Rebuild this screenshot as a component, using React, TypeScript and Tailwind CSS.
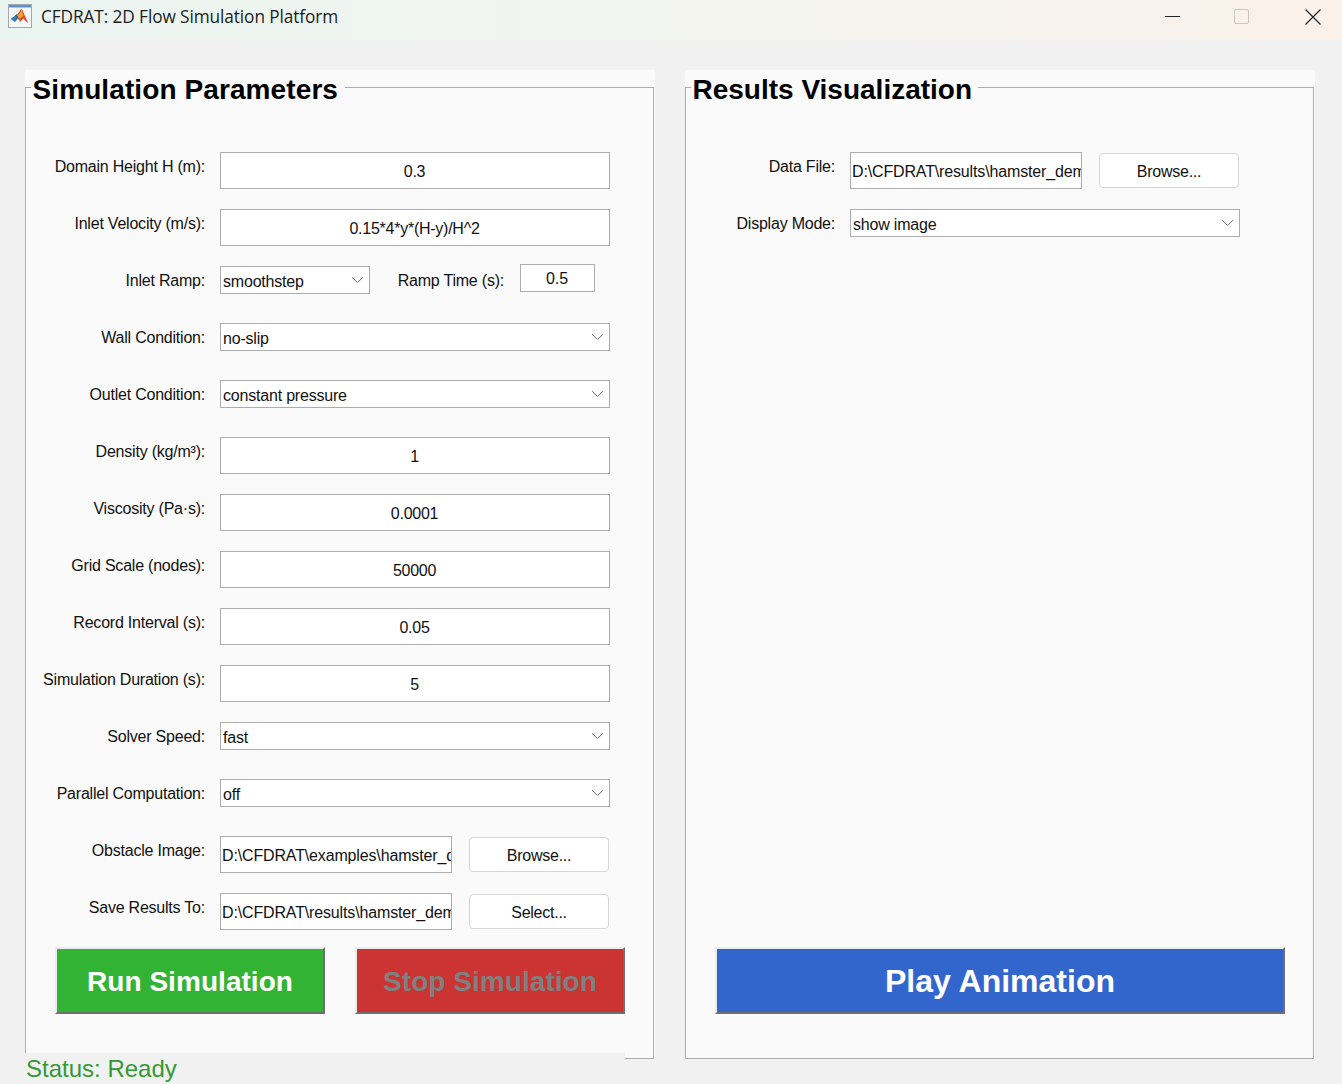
import type { ReactNode } from "react";

const sans = "font-['Liberation_Sans',Arial,sans-serif]";

function Chevron() {
  return (
    <svg className="w-[13px] h-[8px] text-[#6b6b6b]" viewBox="0 0 13 8" fill="none" stroke="currentColor" strokeWidth={1}>
      <path d="M1 1.2l5.5 5.3L12 1.2" />
    </svg>
  );
}

function Label({ text, width }: { text: string; width: string }) {
  return <div className={`${width} shrink-0 text-right text-[16px] leading-[20px] mt-[5px] -mr-[1px] tracking-[-0.22px] text-[#111]`}>{text}</div>;
}

function NumberBox({ value, className = "" }: { value: string; className?: string }) {
  return (
    <div className={`h-[37px] ml-[1px] border border-[#adadad] bg-white flex items-center justify-center pt-[2px] pr-[1px] text-[16px] tracking-[-0.25px] text-[#111] ${className}`}>
      {value}
    </div>
  );
}

function Dropdown({ value, className }: { value: string; className: string }) {
  return (
    <div className={`relative h-[28px] ml-[1px] border border-[#adadad] bg-white flex items-center pl-[2px] pt-[4px] text-[16px] tracking-[-0.2px] text-[#111] ${className}`}>
      <span>{value}</span>
      <span className="absolute right-[5px] top-[9px] flex"><Chevron /></span>
    </div>
  );
}

function PathBox({ value, className }: { value: string; className: string }) {
  return (
    <div className={`h-[37px] ml-[1px] border border-[#adadad] bg-white pl-[1px] flex items-center pt-[2px] overflow-hidden whitespace-nowrap text-[16px] tracking-[-0.15px] text-[#111] ${className}`}>
      {value}
    </div>
  );
}

function SmallButton({ text, className = "" }: { text: string; className?: string }) {
  return (
    <button className={`w-[140px] h-[35px] mt-[1px] pt-[2px] rounded-[4px] border border-[#d6d6d6] bg-white text-[16px] tracking-[-0.25px] text-[#111] ${className}`}>
      {text}
    </button>
  );
}

function BigButton({ text, className }: { text: string; className: string }) {
  return (
    <button className={`h-[67px] border-2 border-t-[#ececec] border-l-[#ececec] border-r-[#6e6e6e] border-b-[#6e6e6e] font-bold ${className}`}>
      {text}
    </button>
  );
}

function Row({ children, label, labelWidth = "w-[179px]" }: { children: ReactNode; label: string; labelWidth?: string }) {
  return (
    <div className="flex h-[37px] mb-[20px] gap-[15px]">
      <Label text={label} width={labelWidth} />
      {children}
    </div>
  );
}

function Panel({ title, titleClass, children }: { title: string; titleClass: string; children: ReactNode }) {
  return (
    <section className="relative w-[630px] h-[989px] bg-[#fafafa] pt-[17px]">
      <div className="w-[629px] h-[972px] border border-[#adadad] flex flex-col pt-[64px]">{children}</div>
      <h2 className={`absolute left-[6px] top-0 h-[36px] pl-[1.5px] bg-[#fafafa] whitespace-nowrap text-[28px] leading-[39px] font-bold text-black ${titleClass}`}>
        {title}
      </h2>
    </section>
  );
}

function MatlabIcon() {
  return (
    <svg className="absolute left-[8px] top-[4px]" width="24" height="24" viewBox="0 0 24 24">
      <rect x="0.5" y="0.5" width="23" height="23" fill="#f4f6f8" stroke="#a5a9ad" />
      <rect x="1" y="1" width="22" height="2.5" fill="#5f93c9" />
      <path d="M2.5 15l5-3.5 3 2.5-3.5 4z" fill="#3a78b8" />
      <path d="M7 11.5l2-1.5 3 4-1.5 1.5z" fill="#2b5d93" />
      <path d="M9 11l4.5-6.5c2 3 3.5 9 7 14.5-2-.8-3.5-2.5-5-4.5-1.5 1-2.5 2.5-3.5 3.5z" fill="#d9481f" />
      <path d="M13.5 4.5c-.5 3-1.5 5.5-4.5 6.5l2.5 4c1-1 2-2 4-3-.8-2.5-1.4-5-2-7.5z" fill="#f0a030" />
    </svg>
  );
}

export default function App() {
  return (
    <div className={`relative w-[1342px] h-[1084px] overflow-hidden bg-[#f1f1f1] ${sans}`}>
      <header className="relative h-[40px] bg-gradient-to-r from-[#eaf5f1] via-[#f2f4ee] to-[#faf1ea] flex items-center">
        <MatlabIcon />
        <span className="ml-[41px] -mt-[7px] text-[17.25px] font-['Open_Sans',sans-serif] text-[#1c1c1c] tracking-[-0.1px]">
          CFDRAT: 2D Flow Simulation Platform
        </span>
        <div className="ml-auto flex items-center -mt-[7px]">
          <span className="block w-[15px] h-px bg-[#222] mr-[54px]" />
          <span className="block w-[15px] h-[15px] rounded-[2px] border-[1.5px] border-[#c8c6c2] mr-[56px]" />
          <svg className="w-[16px] h-[16px] mr-[21px] text-[#222]" viewBox="0 0 16 16" fill="none" stroke="currentColor" strokeWidth={1.2}>
            <path d="M0.5 0.5l15 15M15.5 0.5l-15 15" />
          </svg>
        </div>
      </header>

      <main className="flex gap-[30px] pl-[25px] pt-[30px]">
        <Panel title="Simulation Parameters" titleClass="w-[314px] tracking-[0.1px]">
          <Row label="Domain Height H (m):"><NumberBox value="0.3" className="w-[390px]" /></Row>
          <Row label="Inlet Velocity (m/s):"><NumberBox value="0.15*4*y*(H-y)/H^2" className="w-[390px]" /></Row>
          <Row label="Inlet Ramp:">
            <Dropdown value="smoothstep" className="w-[150px]" />
            <div className="w-[134px] -ml-[15px] shrink-0 text-right text-[16px] leading-[20px] mt-[5px] tracking-[-0.22px] text-[#111]">Ramp Time (s):</div>
            <div className="w-[75px] h-[28px] -mt-[2px] ml-[1px] pr-[1px] pt-[1px] border border-[#adadad] bg-white flex items-center justify-center text-[16px] text-[#111]">0.5</div>
          </Row>
          <Row label="Wall Condition:"><Dropdown value="no-slip" className="w-[390px]" /></Row>
          <Row label="Outlet Condition:"><Dropdown value="constant pressure" className="w-[390px]" /></Row>
          <Row label="Density (kg/m³):"><NumberBox value="1" className="w-[390px]" /></Row>
          <Row label="Viscosity (Pa·s):"><NumberBox value="0.0001" className="w-[390px]" /></Row>
          <Row label="Grid Scale (nodes):"><NumberBox value="50000" className="w-[390px]" /></Row>
          <Row label="Record Interval (s):"><NumberBox value="0.05" className="w-[390px]" /></Row>
          <Row label="Simulation Duration (s):"><NumberBox value="5" className="w-[390px]" /></Row>
          <Row label="Solver Speed:"><Dropdown value="fast" className="w-[390px]" /></Row>
          <Row label="Parallel Computation:"><Dropdown value="off" className="w-[390px]" /></Row>
          <Row label="Obstacle Image:">
            <PathBox value="D:\CFDRAT\examples\hamster_demo.png" className="w-[232px]" />
            <SmallButton text="Browse..." className="ml-[2px]" />
          </Row>
          <Row label="Save Results To:">
            <PathBox value="D:\CFDRAT\results\hamster_demo" className="w-[232px]" />
            <SmallButton text="Select..." className="ml-[2px]" />
          </Row>
          <div className="flex gap-[30px] ml-[29px] -mt-[3px]">
            <BigButton text="Run Simulation" className="w-[270px] bg-[#33b333] text-white text-[28px] pt-[2px] tracking-[0.05px]" />
            <BigButton text="Stop Simulation" className="w-[270px] bg-[#cc3333] text-[#808080] text-[28px] pt-[2px] tracking-[0.05px]" />
          </div>
        </Panel>

        <Panel title="Results Visualization" titleClass="w-[287px]">
          <Row label="Data File:" labelWidth="w-[149px]">
            <PathBox value="D:\CFDRAT\results\hamster_demo" className="w-[232px]" />
            <SmallButton text="Browse..." className="ml-[2px]" />
          </Row>
          <Row label="Display Mode:" labelWidth="w-[149px]"><Dropdown value="show image" className="w-[390px]" /></Row>
          <div className="mt-auto mb-[44px] ml-[29px]">
            <BigButton text="Play Animation" className="w-[570px] bg-[#3366cc] text-white text-[32px] pt-[1px]" />
          </div>
        </Panel>
      </main>

      <div className="absolute left-0 top-[1053px] w-[625px] h-[31px] bg-[#f1f1f1] pl-[26px] text-[24px] leading-[31px] text-[#339933]">
        Status: Ready
      </div>
    </div>
  );
}
